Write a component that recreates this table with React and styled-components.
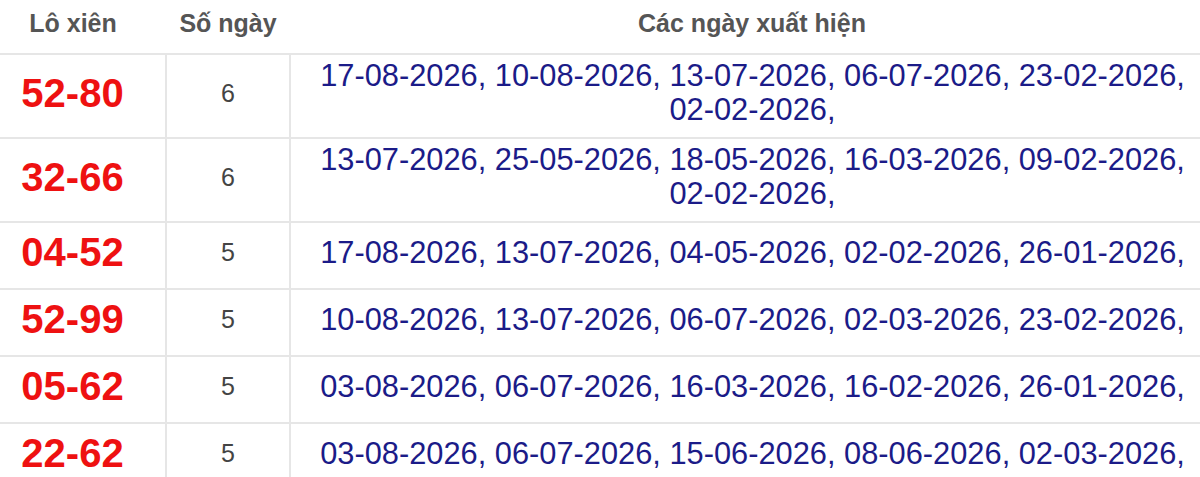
import styled, { createGlobalStyle } from "styled-components";

const GlobalStyle = createGlobalStyle`
  html, body {
    margin: 0;
    padding: 0;
    background: #fff;
    overflow: hidden;
  }
  body {
    font-family: "Liberation Sans", Arial, sans-serif;
  }
`;

const Table = styled.table`
  width: 1214px;
  table-layout: fixed;
  border-collapse: collapse;
  font-family: "Liberation Sans", Arial, sans-serif;

  th,
  td {
    box-sizing: border-box;
  }

  th {
    font-size: 25px;
    font-weight: bold;
    color: #555;
    line-height: 29px;
    padding: 9px 8px 15px;
    text-align: center;
    border-bottom: 2px solid #e6e6e6;
  }

  td {
    border: 2px solid #e6e6e6;
    border-top: none;
    text-align: center;
    vertical-align: middle;
  }

  tr td:first-child {
    border-left: none;
  }
  tr td:last-child {
    border-right: none;
  }
`;

const PairHead = styled.th`
  width: 166px;
  && {
    padding-left: 0;
    padding-right: 20px;
  }
`;

const CountHead = styled.th`
  width: 124px;
`;

const Pair = styled.td`
  && {
    padding: 3px 20px 9px 0;
  }
  font-size: 40px;
  font-weight: bold;
  line-height: 53px;
  color: #ee1111;
`;

const Count = styled.td`
  font-size: 25px;
  color: #444;
  padding: 3px 4px 9px;
`;

const Dates = styled.td`
  && {
    padding: 4px 10px 10px;
  }
  font-size: 30.8px;
  line-height: 34px;
  color: #1b1b88;
`;

const rows = [
  { pair: "52-80", count: 6, dates: ["17-08-2026", "10-08-2026", "13-07-2026", "06-07-2026", "23-02-2026", "02-02-2026"] },
  { pair: "32-66", count: 6, dates: ["13-07-2026", "25-05-2026", "18-05-2026", "16-03-2026", "09-02-2026", "02-02-2026"] },
  { pair: "04-52", count: 5, dates: ["17-08-2026", "13-07-2026", "04-05-2026", "02-02-2026", "26-01-2026"] },
  { pair: "52-99", count: 5, dates: ["10-08-2026", "13-07-2026", "06-07-2026", "02-03-2026", "23-02-2026"] },
  { pair: "05-62", count: 5, dates: ["03-08-2026", "06-07-2026", "16-03-2026", "16-02-2026", "26-01-2026"] },
  { pair: "22-62", count: 5, dates: ["03-08-2026", "06-07-2026", "15-06-2026", "08-06-2026", "02-03-2026"] },
];

export default function App() {
  return (
    <>
      <GlobalStyle />
      <Table>
        <thead>
          <tr>
            <PairHead>Lô xiên</PairHead>
            <CountHead>Số ngày</CountHead>
            <th>Các ngày xuất hiện</th>
          </tr>
        </thead>
        <tbody>
          {rows.map((r) => (
            <tr key={r.pair}>
              <Pair>{r.pair}</Pair>
              <Count>{r.count}</Count>
              <Dates>{r.dates.map((d) => d + ",").join(" ")}</Dates>
            </tr>
          ))}
        </tbody>
      </Table>
    </>
  );
}
